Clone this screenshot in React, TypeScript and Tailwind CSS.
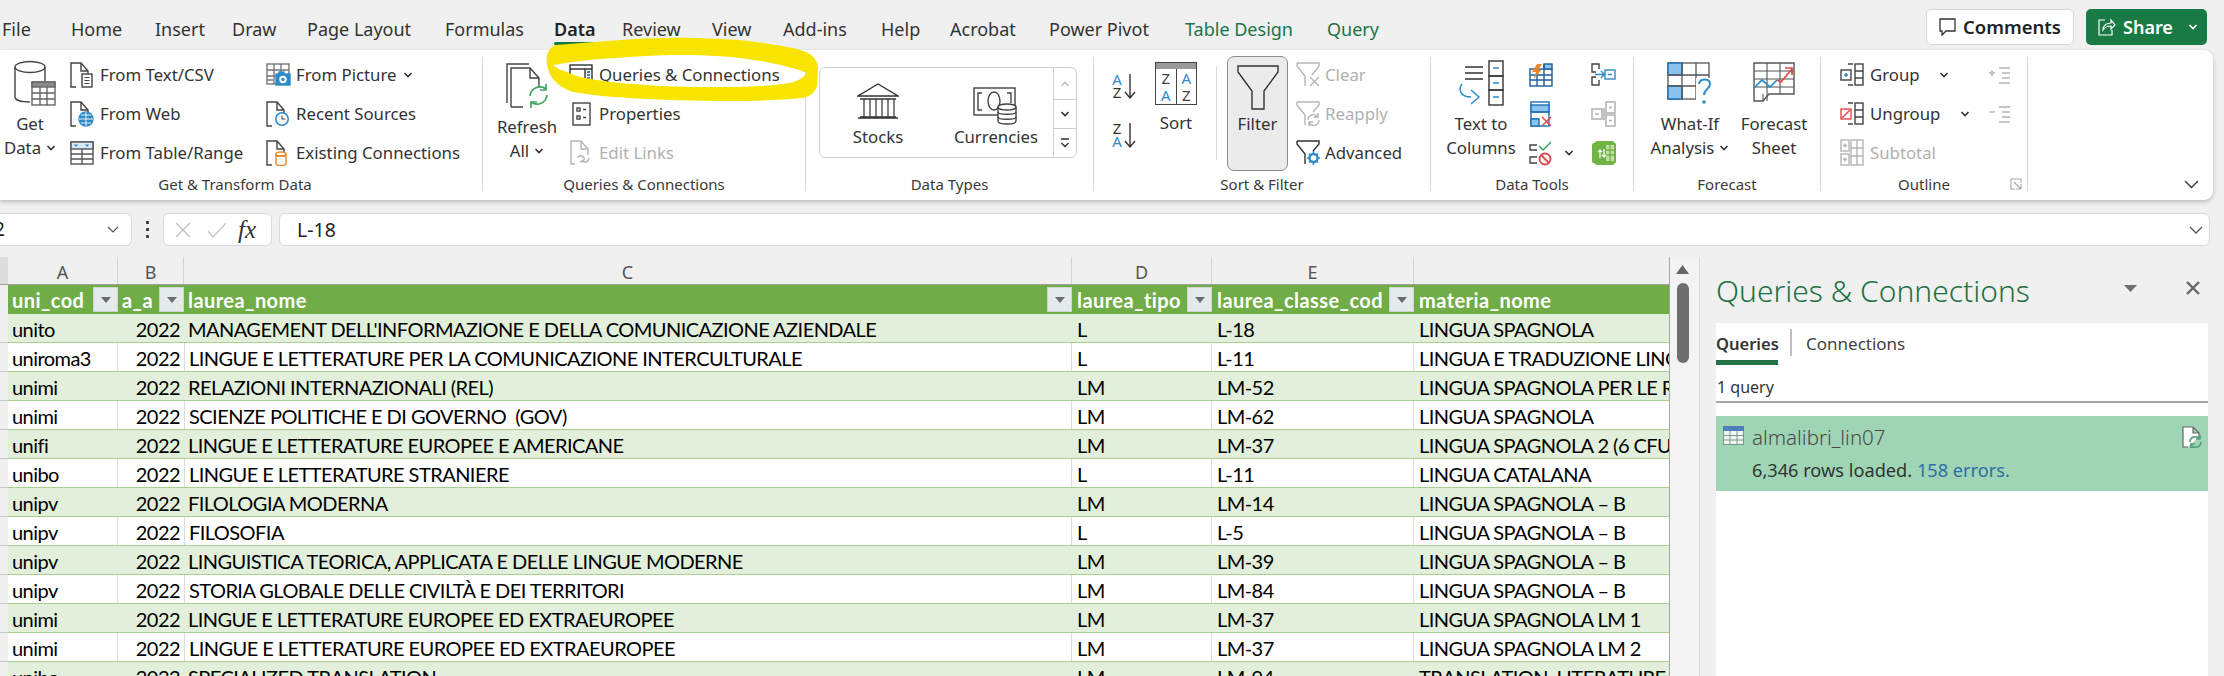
import React from 'react';

const DK = '#444444';
const BL = '#2e8bc9';
const LB = '#8ac4ee';
const GR = '#3fa660';
const RD = '#e0474c';
const OR = '#e8872b';
const LG = '#b5b5b5';

const Ico = ({ w, h, c = DK, children }: { w: number; h: number; c?: string; children: React.ReactNode }) => (
  <svg width={w} height={h} viewBox={`0 0 ${w} ${h}`} fill="none" stroke={c} strokeWidth={1.4} className="shrink-0">
    {children}
  </svg>
);

const Chev = ({ c = '#333333' }: { c?: string }) => (
  <svg width="10" height="6" viewBox="0 0 10 6" fill="none" stroke={c} strokeWidth={1.6} className="shrink-0">
    <path d="M1.5 1l3.5 3.5L8.500 1" />
  </svg>
);

const Doc = ({ c = DK }: { c?: string }) => (
  <path d="M6 25H1V1h10l7 8v3M11 1v8h7" stroke={c} />
);

const GetDataIcon = () => (
  <Ico w={42} h={46}>
    <ellipse cx="16" cy="7" rx="15" ry="5.500" />
    <path d="M1 7v30c0 3 6 5 15 5M31 7v14" />
    <rect x="18" y="22" width="23" height="23" fill="#ffffff" stroke="#666666" />
    <rect x="18" y="22" width="23" height="5" fill="#8a8a8a" stroke="#666666" />
    <path d="M18 33h23M18 39h23M26 27v18M33 27v18" stroke="#666666" />
  </Ico>
);
const TextCsvIcon = () => (
  <Ico w={24} h={26}>
    <Doc />
    <rect x="12" y="12" width="10" height="13" fill="#ffffff" />
    <path d="M14.500 15.500h5M14.500 18.500h5M14.500 21.500h5" strokeWidth={1.1} />
  </Ico>
);
const WebIcon = () => (
  <Ico w={24} h={26}>
    <Doc />
    <circle cx="16" cy="18" r="7" fill={BL} stroke={BL} />
    <path d="M9 18h14M16 11v14M11 14h10M11 22h10" stroke="#ffffff" strokeWidth={0.9} />
  </Ico>
);
const TableIcon = () => (
  <Ico w={24} h={24} c="#555555">
    <rect x="1" y="1" width="22" height="22" />
    <rect x="1" y="1" width="22" height="7" fill="#d7e8f5" />
    <path d="M4 3.500h4l-2 2.500zM15 3.500h4l-2 2.500z" fill={BL} stroke="none" />
    <path d="M1 13h22M1 18h22M12 8v15" />
  </Ico>
);
const PictureIcon = () => (
  <Ico w={25} h={24} c="#777777">
    <rect x="1" y="1" width="22" height="20" />
    <path d="M1 7h22M1 13h8M1 17h6M8 1v20M15 1v8" />
    <rect x="10" y="11" width="14" height="11" fill={BL} stroke={BL} />
    <rect x="13" y="9" width="5" height="3" fill={BL} stroke={BL} />
    <circle cx="17" cy="16.500" r="3" fill="#ffffff" stroke="#ffffff" />
    <circle cx="17" cy="16.500" r="1.700" fill={BL} stroke="none" />
  </Ico>
);
const RecentIcon = () => (
  <Ico w={24} h={26}>
    <Doc />
    <circle cx="16" cy="18" r="6.200" fill="#ffffff" stroke={BL} strokeWidth={1.6} />
    <path d="M16 14.500V18h3.500" stroke={DK} strokeWidth={1.1} />
  </Ico>
);
const ExistingIcon = () => (
  <Ico w={24} h={26}>
    <Doc />
    <path d="M10 14v10c0 1 2.500 1.500 5 1.500s5-.5 5-1.500V14" fill="#ffffff" stroke={OR} />
    <ellipse cx="15" cy="14" rx="5" ry="2" fill="#ffffff" stroke={OR} />
    <path d="M10 15.500c1 1 9 1 10 0" stroke={OR} />
  </Ico>
);
const RefreshIcon = () => (
  <Ico w={42} h={46}>
    <path d="M1 40V1h22" />
    <path d="M5 44V5h19l9 10v9M24 5v10h9M5 44h12" />
    <path d="M24 33a10 10 0 0 1 16-7M41 32a10 10 0 0 1-16 7" stroke={GR} strokeWidth={1.700} />
    <path d="M40 21v6h-6M25 45v-6h6" stroke={GR} strokeWidth={1.700} />
  </Ico>
);
const QueriesIcon = () => (
  <Ico w={24} h={22} c="#333333">
    <rect x="1" y="1" width="22" height="20" />
    <path d="M1 5h22M16 5v16" />
    <path d="M19.500 7v12" stroke={BL} strokeWidth={3} strokeDasharray="2 1" />
  </Ico>
);
const PropertiesIcon = () => (
  <Ico w={19} h={24}>
    <rect x="1" y="1" width="17" height="22" />
    <rect x="5" y="6" width="3" height="3" />
    <rect x="5" y="14" width="3" height="3" />
    <path d="M11 7.500h3M11 15.500h3" />
  </Ico>
);
const EditLinksIcon = () => (
  <Ico w={22} h={25} c={LG}>
    <path d="M5 24H1V1h10l7 8v6M11 1v8h7" />
    <path d="M8 18c0-3 5-3 6 0s-3 5-4 3M19 18c0 4-6 6-7 2" />
  </Ico>
);
const StocksIcon = () => (
  <Ico w={42} h={36} c="#333333">
    <path d="M21 1L1 13h40zM3 16h36M3 34h36M1 35h40" />
    <path d="M7 16v18M13 16v18M19 16v18M25 16v18M31 16v18M37 16v18" strokeWidth={1.2} />
  </Ico>
);
const CurrenciesIcon = () => (
  <Ico w={46} h={38} c="#444444">
    <rect x="1" y="1" width="41" height="27" />
    <path d="M9 6H5v17h4M34 6h4v10" />
    <ellipse cx="21" cy="14" rx="6" ry="9" />
    <path d="M25 20c0-1.500 18-1.500 18 0v14c0 4-18 4-18 0z" fill="#ffffff" />
    <ellipse cx="34" cy="20" rx="9" ry="3" fill="#ffffff" />
    <path d="M25 25c0 3 18 3 18 0M25 30c0 3 18 3 18 0" />
  </Ico>
);
const SortAzIcon = ({ top, bottom }: { top: string; bottom: string }) => (
  <div className="flex items-center w-[27px] h-[28px]">
    <div className="flex flex-col w-[12px] text-[15px] leading-[13px] text-center">
      <span className={top === 'A' ? 'text-[#2e8bc9]' : 'text-[#333333]'}>{top}</span>
      <span className={bottom === 'A' ? 'text-[#2e8bc9]' : 'text-[#333333]'}>{bottom}</span>
    </div>
    <svg width="14" height="28" viewBox="0 0 14 28" fill="none" stroke="#333333" strokeWidth={1.4}>
      <path d="M7 2v24M2 20l5 6 5-6" />
    </svg>
  </div>
);
const SortBigIcon = () => (
  <div className="flex flex-col w-[42px] h-[43px] border border-[#444444]">
    <div className="h-[6px] bg-[#9a9a9a]" />
    <div className="flex flex-1 text-[15px] leading-[17px] text-center">
      <div className="flex-1 border-r border-[#444444] pt-[1px]">
        <div className="text-[#444444]">Z</div>
        <div className="text-[#2e8bc9]">A</div>
      </div>
      <div className="flex-1 pt-[1px]">
        <div className="text-[#2e8bc9]">A</div>
        <div className="text-[#444444]">Z</div>
      </div>
    </div>
  </div>
);
const FunnelBig = () => (
  <Ico w={42} h={46} c="#333333">
    <path d="M1 2h40v6L27 27v18H15V27L1 8z" />
  </Ico>
);
const FunnelClear = () => (
  <Ico w={25} h={25} c={LG}>
    <path d="M1 1h22v3l-7 9M1 1v3l8 10v10" />
    <path d="M14 15l9 9M23 15l-9 9" />
  </Ico>
);
const FunnelReapply = () => (
  <Ico w={25} h={25} c={LG}>
    <path d="M1 1h22v3l-6 7M1 1v3l8 10v10" />
    <path d="M12 19a5.500 5.500 0 0 1 10-3M23 19a5.500 5.500 0 0 1-10 3M22 12v4h-4M13 25v-4h4" />
  </Ico>
);
const FunnelAdvanced = () => (
  <Ico w={25} h={25} c="#333333">
    <path d="M1 1h22v3l-6 7M1 1v3l8 10v10" />
    <circle cx="17.500" cy="18" r="4" stroke={BL} strokeWidth={2.400} />
    <path d="M17.500 11v3M17.500 22v3M11 18h3M21 18h3M13 13.500l2 2M20 20.500l2 2M22 13.500l-2 2M15 20.500l-2 2" stroke={BL} strokeWidth={1.600} />
  </Ico>
);
const TextColsIcon = () => (
  <Ico w={46} h={46} c="#333333">
    <path d="M7 7h18M7 13h18M7 19h18" />
    <rect x="31" y="1" width="14" height="15" />
    <rect x="31" y="16" width="14" height="14" />
    <rect x="31" y="30" width="14" height="15" />
    <path d="M35 8h6M35 23h6M35 37h6" stroke={BL} />
    <path d="M4 24c-4 5-2 13 9 13M13 30l8 7-8 7" stroke={BL} strokeWidth={1.500} />
  </Ico>
);
const FlashFillIcon = () => (
  <Ico w={24} h={24} c="#555555">
    <rect x="1" y="6" width="22" height="17" stroke="#1f5f99" />
    <rect x="15" y="1" width="8" height="5" fill={LB} stroke="#1f5f99" />
    <path d="M1 12h22M1 17h22M8 6v17M15 1v22" stroke="#1f5f99" />
    <path d="M8 1h5L9 7h3.500l-8 9 2.500-7H3z" fill={OR} stroke="none" />
  </Ico>
);
const RemoveDupIcon = () => (
  <Ico w={23} h={26} c="#1f6fb5">
    <rect x="1" y="1" width="18" height="24" />
    <rect x="1" y="4" width="18" height="7" fill={LB} />
    <path d="M1 11h18M1 18h8" />
    <rect x="1" y="18" width="8" height="7" fill={LB} />
    <path d="M12 16l9 9M21 16l-9 9" stroke={RD} strokeWidth={1.500} fill="none" />
  </Ico>
);
const ValidationIcon = () => (
  <Ico w={24} h={26}>
    <path d="M8 5H1v5h7M8 17H1v6h7" />
    <path d="M10 6l4 4 8-8" stroke={GR} strokeWidth={1.500} />
    <circle cx="16" cy="19" r="5.500" stroke={RD} strokeWidth={1.800} />
    <path d="M12 15l8 8" stroke={RD} strokeWidth={1.800} />
  </Ico>
);
const ConsolidateIcon = () => (
  <Ico w={25} h={23}>
    <path d="M8 6V1H1v8h4M5 14H1v8h7v-5" />
    <path d="M4 11.500h9M10 8l3.500 3.500L10 15" stroke={BL} />
    <rect x="14" y="7" width="10" height="9" stroke={BL} />
    <path d="M17 11.500h4" stroke={BL} />
  </Ico>
);
const RelationsIcon = () => (
  <Ico w={25} h={26} c={LG}>
    <rect x="1" y="8" width="10" height="10" strokeWidth={1.600} />
    <rect x="15" y="1" width="9" height="11" strokeWidth={1.600} />
    <rect x="15" y="14" width="9" height="11" strokeWidth={1.600} />
    <path d="M4 13h4M18 6.500h3M18 19.500h3M11 13h2M13 7v12" strokeWidth={1.600} />
  </Ico>
);
const DataModelIcon = () => (
  <svg width="25" height="26" viewBox="0 0 25 26" className="shrink-0">
    <path d="M6 1h16l3 3v18l-3 3H6l-5-3V4z" fill="#71b344" />
    <path d="M15 5h8v16h-8z" fill="#ffffff" opacity="0.55" />
    <path d="M15 10h8M15 15h8M19 5v16" stroke="#71b344" strokeWidth={1.300} />
    <path d="M9 18v-8M7 12l2-2 2 2M13 9v8M11 15l2 2 2-2" stroke="#ffffff" strokeWidth={1.200} fill="none" />
  </svg>
);
const WhatIfIcon = () => (
  <svg width="46" height="44" viewBox="0 0 46 44" fill="none" stroke="#555555" strokeWidth={1.300} className="shrink-0">
    <rect x="1" y="1" width="41" height="36" />
    <rect x="1" y="1" width="14" height="12" fill={LB} stroke="#1f6fb5" strokeWidth={1.500} />
    <rect x="1" y="24" width="14" height="13" fill={LB} stroke="#1f6fb5" strokeWidth={1.500} />
    <path d="M1 13h41M1 24h30M15 1v36M29 1v36" />
    <rect x="29" y="16" width="17" height="28" fill="#ffffff" stroke="none" />
    <path d="M32 22c1-6 11-6 11 0 0 5-6 5-6 11" stroke={BL} strokeWidth={2} />
    <circle cx="37" cy="40" r="1.800" fill={BL} stroke="none" />
  </svg>
);
const ForecastIcon = () => (
  <Ico w={42} h={40} c="#555555">
    <path d="M1 1h40v31H16l-6 7H1z" />
    <path d="M1 9h40M1 17h40M1 25h40M14 1v38M27 1v31M10 32v7" strokeWidth={1.100} />
    <path d="M1 26l8-8 8 7 7-7" stroke={BL} strokeWidth={1.700} />
    <path d="M24 18l4 2 11-13M32 6h7v7" stroke={RD} strokeWidth={1.700} />
  </Ico>
);
const GroupIcon = () => (
  <Ico w={24} h={24}>
    <rect x="15" y="1" width="8" height="21" />
    <path d="M15 8h8M15 15h8M8 1h5M8 22h5" />
    <rect x="1" y="7" width="10" height="10" />
    <path d="M4 12h4M6 10v4" stroke={BL} strokeWidth={1.500} />
  </Ico>
);
const UngroupIcon = () => (
  <Ico w={24} h={24}>
    <rect x="15" y="1" width="8" height="21" />
    <path d="M15 8h8M15 15h8M8 1h5M8 22h5" />
    <rect x="1" y="7" width="10" height="10" stroke={RD} />
    <path d="M2 16l8-8" stroke={RD} />
  </Ico>
);
const SubtotalIcon = () => (
  <Ico w={24} h={27} c={LG}>
    <rect x="1" y="1" width="8" height="11" />
    <rect x="1" y="15" width="8" height="11" />
    <rect x="11" y="1" width="12" height="25" />
    <path d="M17 1v25M11 9h12M11 17h12M3 6.500h4M5 4.500v4M3 20.500h4M5 18.500v4" />
  </Ico>
);
const DetailIcon = ({ minus }: { minus?: boolean }) => (
  <Ico w={23} h={18} c={LG}>
    {minus ? <path d="M1 7h6" /> : <path d="M1 7h6M4 4v6" />}
    <path d="M11 2h11M14 7h8M14 12h8M11 17h11" />
  </Ico>
);

const GroupLabel = ({ children, c = '' }: { children: React.ReactNode; c?: string }) => (
  <div className={`h-[13px] flex items-center justify-center text-[15px] text-[#3a3a3a] leading-none whitespace-nowrap ${c}`}>{children}</div>
);

const Small = ({ icon, label, off, chev, gap = 'gap-[6px]' }: { icon: React.ReactNode; label?: string; off?: boolean; chev?: React.ReactNode; gap?: string }) => (
  <div className={`h-[39px] flex items-center ${gap}`}>
    <div className="w-[24px] flex justify-center">{icon}</div>
    {label && <span className={`whitespace-nowrap ${off ? 'text-[#b0b0b0]' : 'text-[#333333]'}`}>{label}</span>}
    {chev}
  </div>
);

const Big = ({ icon, l1, l2, chev, w, ih = 'h-[58px]' }: { icon: React.ReactNode; l1: string; l2?: string; chev?: boolean; w: string; ih?: string }) => (
  <div className={`flex flex-col items-center ${w}`}>
    <div className={`${ih} flex items-end justify-center w-full pb-[1px]`}>{icon}</div>
    <div className="leading-[24px] mt-[5px] text-[#333333] whitespace-nowrap">{l1}</div>
    {l2 && (
      <div className="leading-[24px] text-[#333333] flex items-center gap-[5px] whitespace-nowrap">
        {l2}
        {chev && <Chev />}
      </div>
    )}
  </div>
);

const tabs = [
  { t: 'File', c: 'w-[69px] text-[#333333]' },
  { t: 'Home', c: 'w-[84px] text-[#333333]' },
  { t: 'Insert', c: 'w-[77px] text-[#333333]' },
  { t: 'Draw', c: 'w-[75px] text-[#333333]' },
  { t: 'Page Layout', c: 'w-[138px] text-[#333333]' },
  { t: 'Formulas', c: 'w-[109px] text-[#333333]' },
  { t: 'Data', c: 'w-[68px] text-[#222222] font-semibold' },
  { t: 'Review', c: 'w-[90px] text-[#333333]' },
  { t: 'View', c: 'w-[71px] text-[#333333]' },
  { t: 'Add-ins', c: 'w-[98px] text-[#333333]' },
  { t: 'Help', c: 'w-[69px] text-[#333333]' },
  { t: 'Acrobat', c: 'w-[99px] text-[#333333]' },
  { t: 'Power Pivot', c: 'w-[136px] text-[#333333]' },
  { t: 'Table Design', c: 'w-[142px] text-[#217346]' },
  { t: 'Query', c: 'w-[70px] text-[#217346]' },
];

const rows = [
  ['unito', "MANAGEMENT DELL'INFORMAZIONE E DELLA COMUNICAZIONE AZIENDALE", 'L', 'L-18', 'LINGUA SPAGNOLA'],
  ['uniroma3', 'LINGUE E LETTERATURE PER LA COMUNICAZIONE INTERCULTURALE', 'L', 'L-11', 'LINGUA E TRADUZIONE LINGUA'],
  ['unimi', 'RELAZIONI INTERNAZIONALI (REL)', 'LM', 'LM-52', 'LINGUA SPAGNOLA PER LE RELAZIONI'],
  ['unimi', 'SCIENZE POLITICHE E DI GOVERNO  (GOV)', 'LM', 'LM-62', 'LINGUA SPAGNOLA'],
  ['unifi', 'LINGUE E LETTERATURE EUROPEE E AMERICANE', 'LM', 'LM-37', 'LINGUA SPAGNOLA 2 (6 CFU)'],
  ['unibo', 'LINGUE E LETTERATURE STRANIERE', 'L', 'L-11', 'LINGUA CATALANA'],
  ['unipv', 'FILOLOGIA MODERNA', 'LM', 'LM-14', 'LINGUA SPAGNOLA – B'],
  ['unipv', 'FILOSOFIA', 'L', 'L-5', 'LINGUA SPAGNOLA – B'],
  ['unipv', 'LINGUISTICA TEORICA, APPLICATA E DELLE LINGUE MODERNE', 'LM', 'LM-39', 'LINGUA SPAGNOLA – B'],
  ['unipv', 'STORIA GLOBALE DELLE CIVILTÀ E DEI TERRITORI', 'LM', 'LM-84', 'LINGUA SPAGNOLA – B'],
  ['unimi', 'LINGUE E LETTERATURE EUROPEE ED EXTRAEUROPEE', 'LM', 'LM-37', 'LINGUA SPAGNOLA LM 1'],
  ['unimi', 'LINGUE E LETTERATURE EUROPEE ED EXTRAEUROPEE', 'LM', 'LM-37', 'LINGUA SPAGNOLA LM 2'],
  ['unibo', 'SPECIALIZED TRANSLATION', 'LM', 'LM-94', 'TRANSLATION, LITERATURE'],
];

const colGrid = 'grid grid-cols-[8px_110px_66px_888px_140px_202px_255px]';
const bodyGrid = 'grid grid-cols-[110px_66px_888px_140px_202px_255px]';

const FilterBtn = () => (
  <div className="w-[25px] h-[25px] shrink-0 bg-[#e4e9ea] border border-[#cfd6d2] flex items-center justify-center">
    <svg width="10" height="6" viewBox="0 0 10 6">
      <path d="M0 0h10L5 6z" fill="#6b6b6b" />
    </svg>
  </div>
);

const HeadCell = ({ t, pl = 'pl-[4px]' }: { t: string; pl?: string }) => (
  <div className={`flex items-center justify-between ${pl} overflow-hidden h-[29px]`}>
    <span className="font-bold whitespace-nowrap pt-[1px]">{t}</span>
    <FilterBtn />
  </div>
);

export default function App() {
  return (
    <div className="relative w-[2224px] h-[676px] overflow-hidden bg-[#f0f0f0] font-['Noto_Sans',sans-serif] text-[15px]">
      {/* tab strip */}
      <div className="h-[50px] flex pl-[2px] pr-[17px] items-start">
        <div className="flex pt-[16px] text-[18px] leading-[26px]">
          {tabs.map((t) => (
            <div key={t.t} className={`relative h-[28px] whitespace-nowrap ${t.c}`}>
              {t.t}
              {t.t === 'Data' && <div className="absolute left-0 top-[26px] w-[42px] h-[3px] bg-[#107c41] rounded-sm" />}
            </div>
          ))}
        </div>
        <div className="ml-auto flex gap-[12px] pt-[9px]">
          <div className="w-[148px] h-[36px] bg-white border border-[#d8d8d8] rounded-[5px] flex items-center justify-center gap-[7px] text-[18.500px] font-semibold text-[#222222]">
            <svg width="17" height="18" viewBox="0 0 17 18" fill="none" stroke="#333333" strokeWidth={1.3}>
              <path d="M1 1h15v12H7l-4 4v-4H1z" />
            </svg>
            Comments
          </div>
          <div className="w-[121px] h-[36px] bg-[#197a43] rounded-[5px] flex items-center pl-[12px] gap-[7px] text-[18px] font-semibold text-white">
            <svg width="18" height="18" viewBox="0 0 18 18" fill="none" stroke="#ffffff" strokeWidth={1.2}>
              <path d="M7 2H1v15h13v-5M5 12c0-5 4-7 8-7V2l4 5-4 4V8c-4 0-6 1-8 4z" />
            </svg>
            Share
            <span className="ml-[8px]">
              <Chev c="#ffffff" />
            </span>
          </div>
        </div>
      </div>

      {/* ribbon */}
      <div className="relative h-[150px] w-[2213px] bg-white rounded-r-[9px] shadow-[0_2px_4px_rgba(0,0,0,0.22)] flex text-[16.800px] pt-[7px] pb-[9px]">
        {/* Get & Transform */}
        <div className="w-[483px] border-r border-[#d4d4d4] flex flex-col">
          <div className="flex-1 min-h-0 flex">
            <Big w="w-[60px]" icon={<GetDataIcon />} l1="Get" l2="Data" chev ih="h-[50px] ml-[10px]" />
            <div className="w-[200px] ml-[10px] flex flex-col -mt-[2px]">
              <Small icon={<TextCsvIcon />} label="From Text/CSV" />
              <Small icon={<WebIcon />} label="From Web" />
              <Small icon={<TableIcon />} label="From Table/Range" />
            </div>
            <div className="flex flex-col -mt-[2px] ml-[-4px]">
              <Small icon={<PictureIcon />} label="From Picture" chev={<Chev />} />
              <Small icon={<RecentIcon />} label="Recent Sources" />
              <Small icon={<ExistingIcon />} label="Existing Connections" />
            </div>
          </div>
          <GroupLabel c="pr-[12px]">Get &amp; Transform Data</GroupLabel>
        </div>

        {/* Queries & Connections */}
        <div className="w-[323px] border-r border-[#d4d4d4] flex flex-col">
          <div className="flex-1 min-h-0 flex">
            <Big w="w-[76px] ml-[6px]" icon={<RefreshIcon />} l1="Refresh" l2="All" chev ih="h-[53px]" />
            <div className="flex flex-col -mt-[2px] ml-[4px]">
              <Small icon={<QueriesIcon />} label="Queries & Connections" />
              <Small icon={<PropertiesIcon />} label="Properties" />
              <Small icon={<EditLinksIcon />} label="Edit Links" off />
            </div>
          </div>
          <GroupLabel>Queries &amp; Connections</GroupLabel>
        </div>

        {/* Data Types */}
        <div className="w-[288px] border-r border-[#d4d4d4] flex flex-col">
          <div className="flex-1 min-h-0 pl-[13px] pt-[10px]">
            <div className="w-[258px] h-[91px] border border-[#cfcfcf] rounded-[6px] flex">
              <div className="flex-1 flex">
                <div className="w-[118px] flex flex-col items-center pt-[15px] pr-[2px]">
                  <StocksIcon />
                  <div className="mt-[7px] leading-[22px] text-[#333333]">Stocks</div>
                </div>
                <div className="flex-1 flex flex-col items-center pt-[19px] pl-[1px]">
                  <CurrenciesIcon />
                  <div className="mt-[1px] leading-[22px] text-[#333333]">Currencies</div>
                </div>
              </div>
              <div className="w-[23px] border-l border-[#cfcfcf] flex flex-col">
                <div className="h-[32px] flex items-center justify-center border-b border-[#cfcfcf]">
                  <svg width="10" height="6" viewBox="0 0 10 6" fill="none" stroke="#c4c4c4" strokeWidth={1.6}>
                    <path d="M1.500 5L5 1.500 8.500 5" />
                  </svg>
                </div>
                <div className="h-[29px] flex items-center justify-center border-b border-[#cfcfcf]">
                  <Chev />
                </div>
                <div className="flex-1 flex items-center justify-center">
                  <svg width="10" height="10" viewBox="0 0 10 10" fill="none" stroke="#333333" strokeWidth={1.400}>
                    <path d="M1 1h8M1.500 5L5 8.500 8.500 5" />
                  </svg>
                </div>
              </div>
            </div>
          </div>
          <GroupLabel>Data Types</GroupLabel>
        </div>

        {/* Sort & Filter */}
        <div className="w-[337px] border-r border-[#d4d4d4] flex flex-col">
          <div className="flex-1 min-h-0 flex">
            <div className="flex flex-col gap-[21px] pl-[17px] pt-[15px] w-[61px]">
              <SortAzIcon top="A" bottom="Z" />
              <SortAzIcon top="Z" bottom="A" />
            </div>
            <Big w="w-[42px]" icon={<SortBigIcon />} l1="Sort" ih="h-[49px]" />
            <div className="w-px h-[94px] bg-[#dcdcdc] mt-[9px] ml-[19px]" />
            <div className="w-[61px] h-[115px] ml-[10px] -mt-[1px] bg-[#ebebeb] border border-[#8c8c8c] rounded-[7px] flex flex-col items-center pt-[7px]">
              <FunnelBig />
              <div className="leading-[24px] mt-[2px] text-[#333333]">Filter</div>
            </div>
            <div className="flex flex-col -mt-[2px] ml-[8px]">
              <Small icon={<FunnelClear />} label="Clear" off gap="gap-[5px]" />
              <Small icon={<FunnelReapply />} label="Reapply" off gap="gap-[5px]" />
              <Small icon={<FunnelAdvanced />} label="Advanced" gap="gap-[5px]" />
            </div>
          </div>
          <GroupLabel>Sort &amp; Filter</GroupLabel>
        </div>

        {/* Data Tools */}
        <div className="w-[203px] border-r border-[#d4d4d4] flex flex-col">
          <div className="flex-1 min-h-0 flex">
            <Big w="w-[84px] ml-[8px]" icon={<TextColsIcon />} l1="Text to" l2="Columns" ih="h-[50px]" />
            <div className="flex flex-col -mt-[2px] ml-[6px] w-[62px]">
              <Small icon={<FlashFillIcon />} />
              <Small icon={<RemoveDupIcon />} />
              <Small icon={<ValidationIcon />} chev={<Chev />} gap="gap-[11px]" />
            </div>
            <div className="flex flex-col -mt-[2px]">
              <Small icon={<ConsolidateIcon />} />
              <Small icon={<RelationsIcon />} />
              <Small icon={<DataModelIcon />} />
            </div>
          </div>
          <GroupLabel>Data Tools</GroupLabel>
        </div>

        {/* Forecast */}
        <div className="w-[187px] border-r border-[#d4d4d4] flex flex-col">
          <div className="flex-1 min-h-0 flex pl-[12px]">
            <Big w="w-[88px]" icon={<WhatIfIcon />} l1="What-If" l2="Analysis" chev ih="h-[50px]" />
            <Big w="w-[78px] ml-[1px]" icon={<ForecastIcon />} l1="Forecast" l2="Sheet" ih="h-[46px] mb-[4px]" />
          </div>
          <GroupLabel>Forecast</GroupLabel>
        </div>

        {/* Outline */}
        <div className="w-[207px] border-r border-[#d4d4d4] flex flex-col">
          <div className="flex-1 min-h-0 flex pl-[19px]">
            <div className="flex flex-col -mt-[2px] w-[147px]">
              <Small icon={<GroupIcon />} label="Group" chev={<span className="ml-[13px]"><Chev /></span>} />
              <Small icon={<UngroupIcon />} label="Ungroup" chev={<span className="ml-[14px]"><Chev /></span>} />
              <Small icon={<SubtotalIcon />} label="Subtotal" off />
            </div>
            <div className="flex flex-col -mt-[2px]">
              <Small icon={<DetailIcon />} />
              <Small icon={<DetailIcon minus />} />
            </div>
          </div>
          <div className="relative">
            <GroupLabel>Outline</GroupLabel>
            <svg width="12" height="12" viewBox="0 0 12 12" fill="none" stroke="#a8a8a8" strokeWidth={1.100} className="absolute right-[5px] top-0">
              <path d="M11 5V1H1v10h4M4 4l7 7M6 11h5V6" />
            </svg>
          </div>
        </div>

        <div className="flex-1 flex items-end justify-end pr-[14px] pb-[2px]">
          <svg width="15" height="9" viewBox="0 0 15 9" fill="none" stroke="#333333" strokeWidth={1.300}>
            <path d="M1 1l6.500 6.500L14 1" />
          </svg>
        </div>
      </div>

      {/* formula bar */}
      <div className="flex h-[33px] mt-[13px] text-[#222222] pr-[14px]">
        <div className="w-[132px] bg-white border border-l-0 border-[#d9d9d9] rounded-r-[6px] flex items-center justify-between pr-[12px] text-[19px]">
          <span className="-ml-[6px]">2</span>
          <svg width="12" height="7" viewBox="0 0 12 7" fill="none" stroke="#555555" strokeWidth={1.200}>
            <path d="M1 1l5 5 5-5" />
          </svg>
        </div>
        <div className="w-[31px] flex flex-col items-center justify-center gap-[4px]">
          <div className="w-[3px] h-[3px] bg-[#444444]" />
          <div className="w-[3px] h-[3px] bg-[#444444]" />
          <div className="w-[3px] h-[3px] bg-[#444444]" />
        </div>
        <div className="w-[109px] bg-white border border-[#d9d9d9] rounded-[6px] flex items-center pl-[10px]">
          <svg width="18" height="18" viewBox="0 0 18 18" fill="none" stroke="#bdbdbd" strokeWidth={1.300} className="shrink-0">
            <path d="M2 2l14 14M16 2L2 16" />
          </svg>
          <svg width="20" height="16" viewBox="0 0 20 16" fill="none" stroke="#c4c4c4" strokeWidth={1.200} className="ml-[15px] shrink-0">
            <path d="M1 9l5 6L19 1" />
          </svg>
          <span className="ml-[11px] font-['Liberation_Serif',serif] italic text-[25px] leading-none text-[#333333]">fx</span>
        </div>
        <div className="ml-[7px] flex-1 bg-white border border-[#d9d9d9] rounded-[6px] flex items-center justify-between pl-[17px] pr-[6px] text-[19.500px]">
          <span>L-18</span>
          <svg width="14" height="8" viewBox="0 0 14 8" fill="none" stroke="#555555" strokeWidth={1.300}>
            <path d="M1 1l6 6 6-6" />
          </svg>
        </div>
      </div>

      {/* sheet + pane */}
      <div className="flex mt-[11px] h-[419px] overflow-hidden">
        <div className="w-[1670px] shrink-0 overflow-hidden border-r border-[#a6a6a6] font-['Lato',sans-serif] text-[20px] tracking-[-0.55px] text-black">
          <div className={`${colGrid} h-[28px] overflow-hidden text-[#555555] font-['Noto_Sans',sans-serif] text-[18px] tracking-normal border-b border-[#a0a0a0] leading-[30px] text-center`}>
            <div className="bg-[#dcdcdc]" />
            <div className="border-r border-[#d4d4d4]">A</div>
            <div className="border-r border-[#d4d4d4]">B</div>
            <div className="border-r border-[#d4d4d4]">C</div>
            <div className="border-r border-[#d4d4d4]">D</div>
            <div className="border-r border-[#d4d4d4]">E</div>
            <div />
          </div>
          <div className={`${colGrid} h-[29px]`}>
            <div className="bg-[#f0f0f0] border-b border-[#c8c8c8]" />
            <div className={`col-span-6 ${bodyGrid} bg-[#70ad47] text-white tracking-[0.45px]`}>
              <HeadCell t="uni_cod" />
              <HeadCell t="a_a" />
              <HeadCell t="laurea_nome" />
              <HeadCell t="laurea_tipo" pl="pl-[5px]" />
              <HeadCell t="laurea_classe_cod" pl="pl-[5px]" />
              <div className="pl-[5px] font-bold whitespace-nowrap leading-[30px]">materia_nome</div>
            </div>
          </div>
          {rows.map((r, i) => (
            <div key={i} className={`${colGrid} h-[29px]`}>
              <div className="bg-[#f0f0f0] border-b border-[#c8c8c8]" />
              <div className={`col-span-6 ${bodyGrid} h-[29px] overflow-hidden leading-[30px] border-b border-[#a9d08e] ${i % 2 === 0 ? 'bg-[#e2efda]' : 'bg-white'}`}>
                <div className={`pl-[4px] whitespace-nowrap overflow-hidden ${i % 2 ? 'border-r border-[#dcdcdc]' : ''}`}>{r[0]}</div>
                <div className="pr-[4px] text-right">2022</div>
                <div className={`pl-[4px] whitespace-pre overflow-hidden ${i % 2 ? 'border-x border-[#dcdcdc]' : ''}`}>{r[1]}</div>
                <div className={`pl-[5px] ${i % 2 ? 'border-r border-[#dcdcdc]' : ''}`}>{r[2]}</div>
                <div className={`pl-[5px] ${i % 2 ? 'border-r border-[#dcdcdc]' : ''}`}>{r[3]}</div>
                <div className="pl-[5px] whitespace-nowrap overflow-hidden">{r[4]}</div>
              </div>
            </div>
          ))}
        </div>

        {/* scrollbar */}
        <div className="w-[30px] shrink-0 bg-[#f3f3f3] border-r border-[#d9d9d9] flex flex-col items-center pt-[8px] pr-[4px]">
          <svg width="13" height="9" viewBox="0 0 13 9">
            <path d="M6.500 0L13 9H0z" fill="#666666" />
          </svg>
          <div className="w-[12px] h-[80px] mt-[9px] bg-[#6d6d6d] rounded-full" />
        </div>

        {/* side pane */}
        <div className="flex-1 flex flex-col pl-[16px] pr-[16px]">
          <div className="h-[66px] flex items-center">
            <span className="text-[30px] font-light text-[#1e7145] whitespace-nowrap">Queries &amp; Connections</span>
            <svg width="13" height="7" viewBox="0 0 13 7" className="ml-auto mr-[49px] -mt-[4px]">
              <path d="M0 0h13L6.500 7z" fill="#707070" />
            </svg>
            <svg width="14" height="14" viewBox="0 0 14 14" fill="none" stroke="#666666" strokeWidth={2.400} className="mr-[8px] -mt-[4px]">
              <path d="M1 1l12 12M13 1L1 13" />
            </svg>
          </div>
          <div className="flex-1 bg-white">
            <div className="h-[42px] flex items-start text-[17px]">
              <div className="relative h-[42px] w-[62px] font-semibold text-[16.500px] text-[#333333] pt-[8px] leading-[26px] whitespace-nowrap">
                Queries
                <div className="absolute left-0 right-0 bottom-0 h-[5px] bg-[#217346]" />
              </div>
              <div className="w-[2px] h-[27px] mt-[6px] ml-[12px] bg-[#bfbfbf]" />
              <div className="ml-[14px] pt-[8px] leading-[26px] text-[#444444]">Connections</div>
            </div>
            <div className="h-[38px] border-b-2 border-[#a6a6a6] flex items-center text-[16px] text-[#333333] pl-[1px] pt-[7px]">1 query</div>
            <div className="mt-[13px] h-[75px] bg-[#9fd5b5] flex">
              <div className="w-[36px] pt-[10px] pl-[7px] shrink-0">
                <svg width="21" height="19" viewBox="0 0 21 19" fill="none" stroke="#6f8f8a" strokeWidth={0.9}>
                  <rect x="0.500" y="0.500" width="20" height="18" fill="#f1f5f2" />
                  <rect x="0" y="0" width="21" height="5" fill="#4f7fb8" stroke="none" />
                  <path d="M0 9.500h21M0 14h21M7 5v14M14 5v14" />
                </svg>
              </div>
              <div className="flex-1 pt-[5px]">
                <div className="text-[20.500px] font-light leading-[33px] text-[#4a4a4a]">almalibri_lin07</div>
                <div className="text-[18.200px] leading-[26px] text-[#333333] mt-[3px]">
                  6,346 rows loaded. <span className="text-[#2f6ea5]">158 errors.</span>
                </div>
              </div>
              <div className="pt-[10px] pr-[5px]">
                <svg width="21" height="22" viewBox="0 0 21 22" fill="none" strokeWidth={1.200}>
                  <path d="M6 21H1V1h10l6 6v4M11 1v6h6" stroke="#666666" fill="#ffffff" />
                  <path d="M8 16a5.500 5.500 0 0 1 10-3M19 16a5.500 5.500 0 0 1-10 3M18 9v4h-4M9 22v-4h4" stroke="#58a07c" strokeWidth={1.700} />
                </svg>
              </div>
            </div>
          </div>
        </div>
      </div>

      {/* yellow marker scribble */}
      <svg width="2224" height="676" viewBox="0 0 2224 676" className="absolute left-0 top-0 pointer-events-none">
        <path
          fillRule="evenodd"
          fill="#f7e400"
          d="M547 55C549 49 552 46 556 45L607 41C640 38 670 37 697 38C725 39 745 40 763 43C785 46 800 49 808 53C815 57 818 62 818 68L817 86C815 93 810 96 803 98C780 100 755 101 730 101C695 101 660 100 630 98C610 97 590 95 573 92C560 88 552 80 549 72C547 66 546 60 547 55ZM553 65C570 62 595 59 617 58C640 56 660 55 680 55C705 55 728 56 747 59C770 62 792 67 807 73C803 78 798 81 790 83C770 86 750 87 730 87C700 87 672 87 647 85C628 84 610 82 597 80C583 78 572 75 567 72C561 70 556 68 553 65Z"
        />
      </svg>
    </div>
  );
}
